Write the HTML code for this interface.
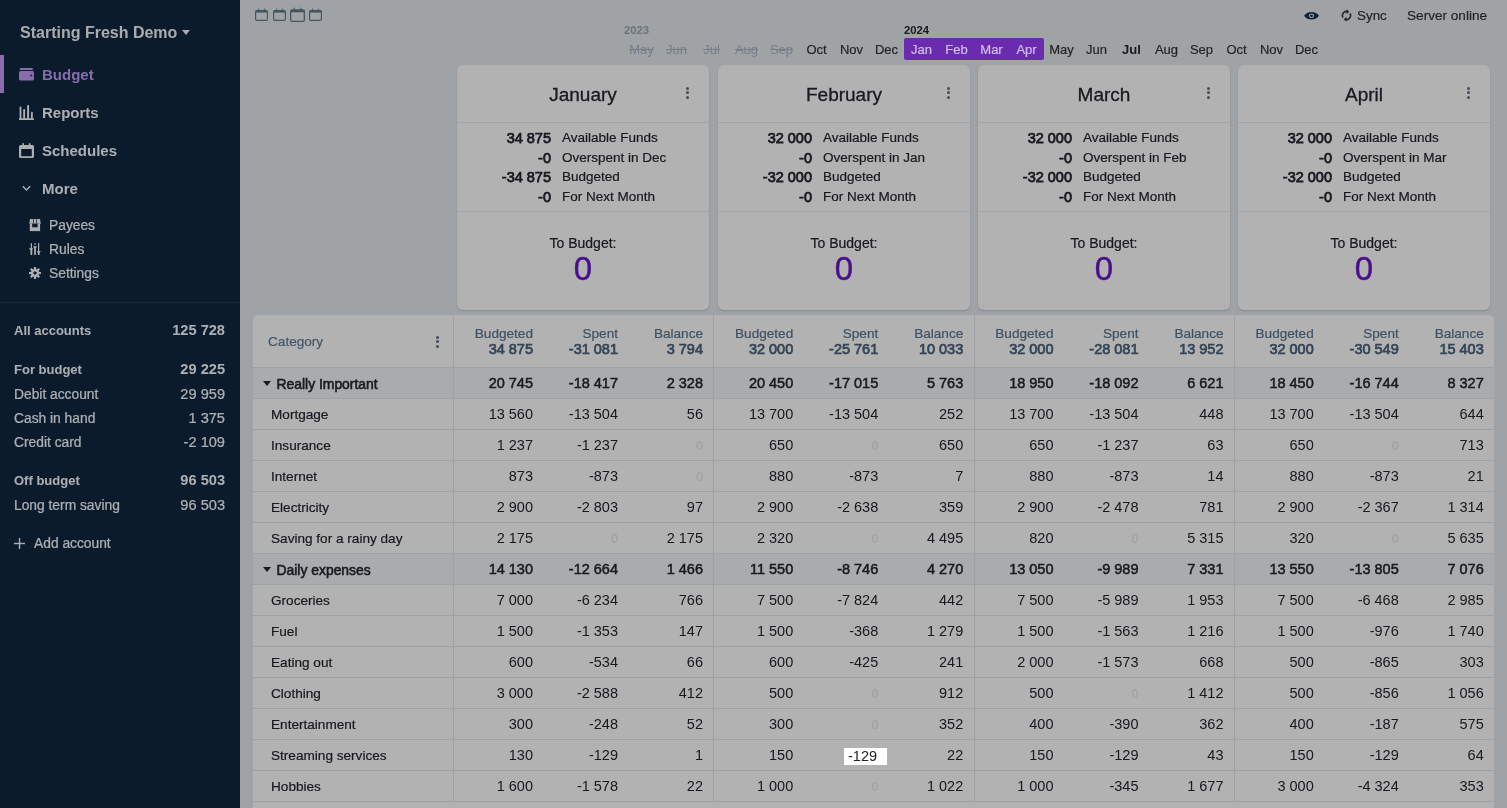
<!DOCTYPE html>
<html><head><meta charset="utf-8"><title>Budget</title>
<style>
*{box-sizing:border-box;margin:0;padding:0}
html,body{width:1507px;height:808px;overflow:hidden}
body>*{will-change:transform}
.sub,.acc,.cell,.sl,.tb,.mo,.abs{-webkit-text-stroke:0.2px currentColor}
[style*="bold"],.sl .n,.yr,.nav,.num{-webkit-text-stroke:0}
.num.sb{font-weight:normal;-webkit-text-stroke:0.5px currentColor}
.card .hd{-webkit-text-stroke:0.3px currentColor}.tz{-webkit-text-stroke:0.4px currentColor}
body{font-family:"Liberation Sans",sans-serif;background:#e6eaee;position:relative;color:#333}
.abs{position:absolute;white-space:nowrap}
#side{position:absolute;left:0;top:0;width:240px;height:808px;background:#102740}
#side .t{color:#f2f5f8}
.nav{position:absolute;left:42px;font-size:15px;font-weight:bold;color:#f5faff;white-space:nowrap;line-height:18px}
.sub{position:absolute;left:49px;font-size:13.8px;color:#f5faff;white-space:nowrap;line-height:16px}
.acc{position:absolute;left:14px;width:211px;font-size:13.8px;color:#f5faff;white-space:nowrap;line-height:16px;display:flex;justify-content:space-between}
.acc b{font-weight:bold}
.acc .n{font-size:14.6px;position:relative;top:-1px}
.cal{position:absolute}
.mo{position:absolute;top:42px;width:35px;text-align:center;font-size:13px;line-height:16px;color:#333}
.mo.s{color:#a9b4c1;text-decoration:line-through;-webkit-text-stroke:0}
.yr{position:absolute;top:24px;font-size:11.3px;font-weight:bold;line-height:13px}
.card{position:absolute;top:65px;height:245px;background:#fff;border-radius:6px;box-shadow:0 1px 2px rgba(0,0,0,.18)}
.card .hd{position:absolute;left:0;right:0;top:0;height:58px;border-bottom:1px solid #e8ecf0;text-align:center;font-size:19px;line-height:22px;padding-top:19px;color:#272630}
.dots{position:absolute;width:3px}
.dots i{display:block;width:3px;height:3px;border-radius:50%;background:#5d7185;margin-bottom:1.3px}
.card .sm{position:absolute;left:0;right:0;top:58px;height:89px;border-bottom:1px solid #e8ecf0}
.sl{position:absolute;left:0;right:0;height:16px;font-size:13.5px;line-height:16px;color:#272630}
.sl .n{position:absolute;right:158px;font-size:14.5px}
.sl .n.s5{-webkit-text-stroke:0.75px currentColor}
.sl .l{position:absolute;left:105px}
.tb{position:absolute;left:0;right:0;top:170px;text-align:center;font-size:14px;line-height:16px;color:#272630}
.tz{position:absolute;left:0;right:0;top:186.7px;text-align:center;font-size:33px;line-height:34px;color:#6b15c9}
#tbl{position:absolute;left:253px;top:315px;width:1241px;height:600px;background:#fff;border-radius:5px 5px 0 0;overflow:hidden}
.row{position:absolute;left:0;width:1241px;height:31px;border-bottom:1px solid #e3e7eb}
.row.g{background:#f2f5f8}
.cell{position:absolute;top:1px;height:30px;line-height:30px;font-size:13.6px;white-space:nowrap;color:#272630}
.vd{position:absolute;top:0;width:1px;height:486px;background:#e3e7eb}
.num{font-size:14.5px;top:0}
.z{color:#e4e8ec}
#ov{position:absolute;left:0;top:0;width:1507px;height:808px;background:rgba(0,0,0,0.3)}
#hl{position:absolute;left:844px;top:748px;width:43px;height:17px;background:#fff;font-size:14.5px;line-height:17px;padding-left:4px;color:#222}
</style></head><body>

<div id="side">
<div class="abs t" style="left:20px;top:23px;font-size:16px;font-weight:bold;line-height:20px">Starting Fresh Demo</div>
<svg class="abs" style="left:182px;top:30px" width="8" height="5" viewBox="0 0 8 5"><path d="M0 0H8L4 5Z" fill="#f2f5f8"/></svg>
<div class="abs" style="left:0;top:55px;width:4px;height:38px;background:#c59afa"></div>
<svg class="abs" style="left:19px;top:68px" width="15" height="13" viewBox="0 0 15 13"><path d="M1.5 0H12.5A1 1 0 0 1 13.7 1.2V2H0.8V1A1 1 0 0 1 1.5 0Z" fill="#c39cf7"/><rect x="0" y="3" width="15" height="9.5" rx="1.5" fill="#c39cf7"/><circle cx="12.3" cy="7.5" r="1.1" fill="#3a2470"/></svg>
<div class="nav" style="top:66px;color:#c39cf7">Budget</div>
<svg class="abs" style="left:19px;top:105px" width="15" height="16" viewBox="0 0 15 16"><g fill="#f5faff"><rect x="0" y="13.3" width="15" height="1.8" rx="0.5"/><rect x="0.6" y="1.5" width="1.8" height="13" rx="0.9"/><rect x="4.2" y="4.1" width="1.9" height="10" rx="0.9"/><rect x="8.1" y="0" width="2" height="14" rx="1"/><rect x="12" y="6.8" width="1.8" height="7" rx="0.9"/></g></svg>
<div class="nav" style="top:104px">Reports</div>
<svg class="abs" style="left:19px;top:143px" width="15" height="16" viewBox="0 0 15 16"><path fill-rule="evenodd" d="M1.5 2H13.5A1.5 1.5 0 0 1 15 3.5V13.6A1.5 1.5 0 0 1 13.5 15.1H1.5A1.5 1.5 0 0 1 0 13.6V3.5A1.5 1.5 0 0 1 1.5 2ZM2.2 6.1V13.2H12.8V6.1Z" fill="#f5faff"/><rect x="3.3" y="0" width="1.7" height="3.2" rx="0.8" fill="#f5faff"/><rect x="9.8" y="0" width="1.7" height="3.2" rx="0.8" fill="#f5faff"/></svg>
<div class="nav" style="top:142px">Schedules</div>
<svg class="abs" style="left:22px;top:185px" width="9" height="7" viewBox="0 0 9 7"><path d="M0.8 1.3L4.5 5L8.2 1.3" fill="none" stroke="#f5faff" stroke-width="1.4"/></svg>
<div class="nav" style="top:179.5px">More</div>
<svg class="abs" style="left:29px;top:219px" width="12" height="13" viewBox="0 0 12 13"><g fill="#f5faff"><path d="M1 0H4.2L3.9 4.7H0.2Z"/><path d="M4.8 0H7.2L7.4 4.7H4.6Z"/><path d="M7.8 0H11L11.8 4.7H8.1Z"/><rect x="0.8" y="4.7" width="10.3" height="7.4"/></g><rect x="3.2" y="4.7" width="5.4" height="3.6" fill="#102740"/></svg>
<div class="sub" style="top:218px">Payees</div>
<svg class="abs" style="left:29px;top:243px" width="12" height="12" viewBox="0 0 12 12"><g fill="#f5faff"><rect x="1.8" y="0" width="1.2" height="12" rx="0.6"/><rect x="1.5" y="6" width="1.8" height="6" rx="0.8"/><path d="M0 5.3H4.2L3.2 7H1Z"/><rect x="5.1" y="0" width="1.8" height="2.2" rx="0.8" opacity="0.6"/><rect x="5.1" y="3" width="1.8" height="9" rx="0.8"/><path d="M4 3.4H8L7 5.2H5Z"/><rect x="9" y="0" width="1.2" height="12" rx="0.6"/><rect x="8.7" y="9" width="1.8" height="3" rx="0.8"/><path d="M7.9 8.1H11.7L10.7 9.7H8.9Z"/></g></svg>
<div class="sub" style="top:242px">Rules</div>
<svg class="abs" style="left:29px;top:267px" width="12" height="12" viewBox="0 0 12 12"><g fill="#f5faff" transform="translate(6 6)"><circle r="4"/><rect x="-1.1" y="-6" width="2.2" height="12"/><rect x="-1.1" y="-6" width="2.2" height="12" transform="rotate(45)"/><rect x="-1.1" y="-6" width="2.2" height="12" transform="rotate(90)"/><rect x="-1.1" y="-6" width="2.2" height="12" transform="rotate(135)"/></g><rect x="4.6" y="4.6" width="2.8" height="2.8" transform="rotate(45 6 6)" fill="#102740"/></svg>
<div class="sub" style="top:266px">Settings</div>
<div class="abs" style="left:0;top:302px;width:240px;height:1px;background:#1f3852"></div>
<div class="acc" style="top:323px;font-weight:bold;font-size:13px"><span>All accounts</span><span class="n">125 728</span></div>
<div class="acc" style="top:362px;font-weight:bold;font-size:13px"><span>For budget</span><span class="n">29 225</span></div>
<div class="acc" style="top:386.5px"><span>Debit account</span><span class="n">29 959</span></div>
<div class="acc" style="top:410.5px"><span>Cash in hand</span><span class="n">1 375</span></div>
<div class="acc" style="top:434.5px"><span>Credit card</span><span class="n">-2 109</span></div>
<div class="acc" style="top:473px;font-weight:bold;font-size:13px"><span>Off budget</span><span class="n">96 503</span></div>
<div class="acc" style="top:497.5px"><span>Long term saving</span><span class="n">96 503</span></div>
<svg class="abs" style="left:14px;top:537.5px" width="11" height="11" viewBox="0 0 11 11"><g fill="#f5faff"><rect x="4.8" y="0" width="1.4" height="11"/><rect x="0" y="4.8" width="11" height="1.4"/></g></svg>
<div class="sub" style="left:34px;top:536px">Add account</div>
</div>
<svg class="cal" style="left:255px;top:8px" width="13" height="13" viewBox="0 0 13 13" preserveAspectRatio="none"><rect x="0.6" y="2.6" width="11.8" height="9.8" rx="1.2" fill="none" stroke="#63788d" stroke-width="1.15"/><rect x="0.6" y="2.6" width="11.8" height="2" fill="#63788d"/><rect x="3.1" y="0.6" width="1" height="2.6" fill="#63788d"/><rect x="8.9" y="0.6" width="1" height="2.6" fill="#63788d"/></svg>
<svg class="cal" style="left:273px;top:8px" width="13" height="13" viewBox="0 0 13 13" preserveAspectRatio="none"><rect x="0.6" y="2.6" width="11.8" height="9.8" rx="1.2" fill="none" stroke="#63788d" stroke-width="1.15"/><rect x="0.6" y="2.6" width="11.8" height="2" fill="#63788d"/><rect x="3.1" y="0.6" width="1" height="2.6" fill="#63788d"/><rect x="8.9" y="0.6" width="1" height="2.6" fill="#63788d"/></svg>
<svg class="cal" style="left:290px;top:7px" width="15" height="15" viewBox="0 0 13 13" preserveAspectRatio="none" preserveAspectRatio="none"><rect x="0.6" y="2.6" width="11.8" height="9.8" rx="1.2" fill="none" stroke="#63788d" stroke-width="1.15"/><rect x="0.6" y="2.6" width="11.8" height="2" fill="#63788d"/><rect x="3.1" y="0.6" width="1" height="2.6" fill="#63788d"/><rect x="8.9" y="0.6" width="1" height="2.6" fill="#63788d"/></svg>
<svg class="cal" style="left:309px;top:8px" width="13" height="13" viewBox="0 0 13 13" preserveAspectRatio="none"><rect x="0.6" y="2.6" width="11.8" height="9.8" rx="1.2" fill="none" stroke="#63788d" stroke-width="1.15"/><rect x="0.6" y="2.6" width="11.8" height="2" fill="#63788d"/><rect x="3.1" y="0.6" width="1" height="2.6" fill="#63788d"/><rect x="8.9" y="0.6" width="1" height="2.6" fill="#63788d"/></svg>
<svg class="abs" style="left:1304px;top:11.8px" width="15" height="7.6" viewBox="0 0 15 9" preserveAspectRatio="none"><path d="M0 4.5C2 1.2 4.6 0 7.5 0S13 1.2 15 4.5C13 7.8 10.4 9 7.5 9S2 7.8 0 4.5Z" fill="#1f3247"/><circle cx="7.5" cy="4.5" r="2.6" fill="#e6eaee"/><circle cx="7.5" cy="4.5" r="1.4" fill="#1f3247"/></svg>
<svg class="abs" style="left:1341px;top:9px" width="11" height="13" viewBox="0 0 11 13"><g fill="none" stroke="#333" stroke-width="1.6"><path d="M2 8.5A4 4 0 0 1 6.5 2.6"/><path d="M9 4.5A4 4 0 0 1 4.5 10.4"/></g><path d="M5.5 0.3L8.3 2.8L5.5 5.2Z" fill="#333"/><path d="M5.5 7.8L2.7 10.2L5.5 12.7Z" fill="#333"/></svg>
<div class="abs" style="left:1357px;top:8px;font-size:13.4px;line-height:16px;color:#333">Sync</div>
<div class="abs" style="left:1407px;top:8px;font-size:13.6px;line-height:16px;color:#333">Server online</div>
<div class="yr" style="left:624px;color:#9aa5b1">2023</div>
<div class="yr" style="left:904px;color:#272630">2024</div>
<div class="mo s" style="left:623.5px">May</div>
<div class="mo s" style="left:658.5px">Jun</div>
<div class="mo s" style="left:693.5px">Jul</div>
<div class="mo s" style="left:728.5px">Aug</div>
<div class="mo s" style="left:763.5px">Sep</div>
<div class="mo" style="left:798.5px">Oct</div>
<div class="mo" style="left:833.5px">Nov</div>
<div class="mo" style="left:868.5px">Dec</div>
<div class="mo" style="left:1043.5px">May</div>
<div class="mo" style="left:1078.5px">Jun</div>
<div class="mo" style="left:1113.5px;font-weight:bold;color:#272630">Jul</div>
<div class="mo" style="left:1148.5px">Aug</div>
<div class="mo" style="left:1183.5px">Sep</div>
<div class="mo" style="left:1218.5px">Oct</div>
<div class="mo" style="left:1253.5px">Nov</div>
<div class="mo" style="left:1288.5px">Dec</div>
<div class="card" style="left:457px;width:252px">
<div class="hd">January</div>
<div class="dots" style="left:229px;top:22px"><i></i><i></i><i></i></div>
<div class="sm">
<div class="sl" style="top:6.5px"><span class="n s5">34 875</span><span class="l">Available Funds</span></div>
<div class="sl" style="top:27.0px"><span class="n s5">-0</span><span class="l">Overspent in Dec</span></div>
<div class="sl" style="top:45.8px"><span class="n s5">-34 875</span><span class="l">Budgeted</span></div>
<div class="sl" style="top:65.8px"><span class="n s5">-0</span><span class="l">For Next Month</span></div>
</div>
<div class="tb">To Budget:</div>
<div class="tz">0</div>
</div>
<div class="card" style="left:718px;width:252px">
<div class="hd">February</div>
<div class="dots" style="left:229px;top:22px"><i></i><i></i><i></i></div>
<div class="sm">
<div class="sl" style="top:6.5px"><span class="n s5">32 000</span><span class="l">Available Funds</span></div>
<div class="sl" style="top:27.0px"><span class="n s5">-0</span><span class="l">Overspent in Jan</span></div>
<div class="sl" style="top:45.8px"><span class="n s5">-32 000</span><span class="l">Budgeted</span></div>
<div class="sl" style="top:65.8px"><span class="n s5">-0</span><span class="l">For Next Month</span></div>
</div>
<div class="tb">To Budget:</div>
<div class="tz">0</div>
</div>
<div class="card" style="left:978px;width:252px">
<div class="hd">March</div>
<div class="dots" style="left:229px;top:22px"><i></i><i></i><i></i></div>
<div class="sm">
<div class="sl" style="top:6.5px"><span class="n s5">32 000</span><span class="l">Available Funds</span></div>
<div class="sl" style="top:27.0px"><span class="n s5">-0</span><span class="l">Overspent in Feb</span></div>
<div class="sl" style="top:45.8px"><span class="n s5">-32 000</span><span class="l">Budgeted</span></div>
<div class="sl" style="top:65.8px"><span class="n s5">-0</span><span class="l">For Next Month</span></div>
</div>
<div class="tb">To Budget:</div>
<div class="tz">0</div>
</div>
<div class="card" style="left:1238px;width:252px">
<div class="hd">April</div>
<div class="dots" style="left:229px;top:22px"><i></i><i></i><i></i></div>
<div class="sm">
<div class="sl" style="top:6.5px"><span class="n s5">32 000</span><span class="l">Available Funds</span></div>
<div class="sl" style="top:27.0px"><span class="n s5">-0</span><span class="l">Overspent in Mar</span></div>
<div class="sl" style="top:45.8px"><span class="n s5">-32 000</span><span class="l">Budgeted</span></div>
<div class="sl" style="top:65.8px"><span class="n s5">-0</span><span class="l">For Next Month</span></div>
</div>
<div class="tb">To Budget:</div>
<div class="tz">0</div>
</div>
<div id="tbl">
<div class="row" style="top:0;height:53px;">
<div class="cell" style="left:15px;top:12px;height:30px;color:#627d98">Category</div>
<div class="dots" style="left:183px;top:21px"><i></i><i></i><i></i></div>
<div class="abs" style="right:961.00px;top:11px;text-align:right;font-size:13.6px;line-height:16px;color:#5c748c">Budgeted</div>
<div class="abs num sb" style="right:961.00px;top:26px;text-align:right;line-height:17px;color:#4d647b;-webkit-text-stroke:0.7px #4d647b">34 875</div>
<div class="abs" style="right:876.00px;top:11px;text-align:right;font-size:13.6px;line-height:16px;color:#5c748c">Spent</div>
<div class="abs num sb" style="right:876.00px;top:26px;text-align:right;line-height:17px;color:#4d647b;-webkit-text-stroke:0.7px #4d647b">-31 081</div>
<div class="abs" style="right:791.00px;top:11px;text-align:right;font-size:13.6px;line-height:16px;color:#5c748c">Balance</div>
<div class="abs num sb" style="right:791.00px;top:26px;text-align:right;line-height:17px;color:#4d647b;-webkit-text-stroke:0.7px #4d647b">3 794</div>
<div class="abs" style="right:700.75px;top:11px;text-align:right;font-size:13.6px;line-height:16px;color:#5c748c">Budgeted</div>
<div class="abs num sb" style="right:700.75px;top:26px;text-align:right;line-height:17px;color:#4d647b;-webkit-text-stroke:0.7px #4d647b">32 000</div>
<div class="abs" style="right:615.75px;top:11px;text-align:right;font-size:13.6px;line-height:16px;color:#5c748c">Spent</div>
<div class="abs num sb" style="right:615.75px;top:26px;text-align:right;line-height:17px;color:#4d647b;-webkit-text-stroke:0.7px #4d647b">-25 761</div>
<div class="abs" style="right:530.75px;top:11px;text-align:right;font-size:13.6px;line-height:16px;color:#5c748c">Balance</div>
<div class="abs num sb" style="right:530.75px;top:26px;text-align:right;line-height:17px;color:#4d647b;-webkit-text-stroke:0.7px #4d647b">10 033</div>
<div class="abs" style="right:440.50px;top:11px;text-align:right;font-size:13.6px;line-height:16px;color:#5c748c">Budgeted</div>
<div class="abs num sb" style="right:440.50px;top:26px;text-align:right;line-height:17px;color:#4d647b;-webkit-text-stroke:0.7px #4d647b">32 000</div>
<div class="abs" style="right:355.50px;top:11px;text-align:right;font-size:13.6px;line-height:16px;color:#5c748c">Spent</div>
<div class="abs num sb" style="right:355.50px;top:26px;text-align:right;line-height:17px;color:#4d647b;-webkit-text-stroke:0.7px #4d647b">-28 081</div>
<div class="abs" style="right:270.50px;top:11px;text-align:right;font-size:13.6px;line-height:16px;color:#5c748c">Balance</div>
<div class="abs num sb" style="right:270.50px;top:26px;text-align:right;line-height:17px;color:#4d647b;-webkit-text-stroke:0.7px #4d647b">13 952</div>
<div class="abs" style="right:180.25px;top:11px;text-align:right;font-size:13.6px;line-height:16px;color:#5c748c">Budgeted</div>
<div class="abs num sb" style="right:180.25px;top:26px;text-align:right;line-height:17px;color:#4d647b;-webkit-text-stroke:0.7px #4d647b">32 000</div>
<div class="abs" style="right:95.25px;top:11px;text-align:right;font-size:13.6px;line-height:16px;color:#5c748c">Spent</div>
<div class="abs num sb" style="right:95.25px;top:26px;text-align:right;line-height:17px;color:#4d647b;-webkit-text-stroke:0.7px #4d647b">-30 549</div>
<div class="abs" style="right:10.25px;top:11px;text-align:right;font-size:13.6px;line-height:16px;color:#5c748c">Balance</div>
<div class="abs num sb" style="right:10.25px;top:26px;text-align:right;line-height:17px;color:#4d647b;-webkit-text-stroke:0.7px #4d647b">15 403</div>
</div>
<div class="row g" style="top:53px">
<svg class="abs" style="left:10px;top:13px" width="8" height="5" viewBox="0 0 8 5"><path d="M0 0H8L4 5Z" fill="#272630"/></svg>
<div class="cell" style="left:23.5px;font-size:13.9px;-webkit-text-stroke:0.55px currentColor">Really Important</div>
<div class="cell num sb" style="right:961.00px;">20 745</div>
<div class="cell num sb" style="right:876.00px;">-18 417</div>
<div class="cell num sb" style="right:791.00px;">2 328</div>
<div class="cell num sb" style="right:700.75px;">20 450</div>
<div class="cell num sb" style="right:615.75px;">-17 015</div>
<div class="cell num sb" style="right:530.75px;">5 763</div>
<div class="cell num sb" style="right:440.50px;">18 950</div>
<div class="cell num sb" style="right:355.50px;">-18 092</div>
<div class="cell num sb" style="right:270.50px;">6 621</div>
<div class="cell num sb" style="right:180.25px;">18 450</div>
<div class="cell num sb" style="right:95.25px;">-16 744</div>
<div class="cell num sb" style="right:10.25px;">8 327</div>
</div>
<div class="row" style="top:84px">
<div class="cell" style="left:18px">Mortgage</div>
<div class="cell num" style="right:961.00px;">13 560</div>
<div class="cell num" style="right:876.00px;">-13 504</div>
<div class="cell num" style="right:791.00px;">56</div>
<div class="cell num" style="right:700.75px;">13 700</div>
<div class="cell num" style="right:615.75px;">-13 504</div>
<div class="cell num" style="right:530.75px;">252</div>
<div class="cell num" style="right:440.50px;">13 700</div>
<div class="cell num" style="right:355.50px;">-13 504</div>
<div class="cell num" style="right:270.50px;">448</div>
<div class="cell num" style="right:180.25px;">13 700</div>
<div class="cell num" style="right:95.25px;">-13 504</div>
<div class="cell num" style="right:10.25px;">644</div>
</div>
<div class="row" style="top:115px">
<div class="cell" style="left:18px">Insurance</div>
<div class="cell num" style="right:961.00px;">1 237</div>
<div class="cell num" style="right:876.00px;">-1 237</div>
<div class="cell z" style="right:791.00px;font-size:12px">0</div>
<div class="cell num" style="right:700.75px;">650</div>
<div class="cell z" style="right:615.75px;font-size:12px">0</div>
<div class="cell num" style="right:530.75px;">650</div>
<div class="cell num" style="right:440.50px;">650</div>
<div class="cell num" style="right:355.50px;">-1 237</div>
<div class="cell num" style="right:270.50px;">63</div>
<div class="cell num" style="right:180.25px;">650</div>
<div class="cell z" style="right:95.25px;font-size:12px">0</div>
<div class="cell num" style="right:10.25px;">713</div>
</div>
<div class="row" style="top:146px">
<div class="cell" style="left:18px">Internet</div>
<div class="cell num" style="right:961.00px;">873</div>
<div class="cell num" style="right:876.00px;">-873</div>
<div class="cell z" style="right:791.00px;font-size:12px">0</div>
<div class="cell num" style="right:700.75px;">880</div>
<div class="cell num" style="right:615.75px;">-873</div>
<div class="cell num" style="right:530.75px;">7</div>
<div class="cell num" style="right:440.50px;">880</div>
<div class="cell num" style="right:355.50px;">-873</div>
<div class="cell num" style="right:270.50px;">14</div>
<div class="cell num" style="right:180.25px;">880</div>
<div class="cell num" style="right:95.25px;">-873</div>
<div class="cell num" style="right:10.25px;">21</div>
</div>
<div class="row" style="top:177px">
<div class="cell" style="left:18px">Electricity</div>
<div class="cell num" style="right:961.00px;">2 900</div>
<div class="cell num" style="right:876.00px;">-2 803</div>
<div class="cell num" style="right:791.00px;">97</div>
<div class="cell num" style="right:700.75px;">2 900</div>
<div class="cell num" style="right:615.75px;">-2 638</div>
<div class="cell num" style="right:530.75px;">359</div>
<div class="cell num" style="right:440.50px;">2 900</div>
<div class="cell num" style="right:355.50px;">-2 478</div>
<div class="cell num" style="right:270.50px;">781</div>
<div class="cell num" style="right:180.25px;">2 900</div>
<div class="cell num" style="right:95.25px;">-2 367</div>
<div class="cell num" style="right:10.25px;">1 314</div>
</div>
<div class="row" style="top:208px">
<div class="cell" style="left:18px">Saving for a rainy day</div>
<div class="cell num" style="right:961.00px;">2 175</div>
<div class="cell z" style="right:876.00px;font-size:12px">0</div>
<div class="cell num" style="right:791.00px;">2 175</div>
<div class="cell num" style="right:700.75px;">2 320</div>
<div class="cell z" style="right:615.75px;font-size:12px">0</div>
<div class="cell num" style="right:530.75px;">4 495</div>
<div class="cell num" style="right:440.50px;">820</div>
<div class="cell z" style="right:355.50px;font-size:12px">0</div>
<div class="cell num" style="right:270.50px;">5 315</div>
<div class="cell num" style="right:180.25px;">320</div>
<div class="cell z" style="right:95.25px;font-size:12px">0</div>
<div class="cell num" style="right:10.25px;">5 635</div>
</div>
<div class="row g" style="top:239px">
<svg class="abs" style="left:10px;top:13px" width="8" height="5" viewBox="0 0 8 5"><path d="M0 0H8L4 5Z" fill="#272630"/></svg>
<div class="cell" style="left:23.5px;font-size:13.9px;-webkit-text-stroke:0.55px currentColor">Daily expenses</div>
<div class="cell num sb" style="right:961.00px;">14 130</div>
<div class="cell num sb" style="right:876.00px;">-12 664</div>
<div class="cell num sb" style="right:791.00px;">1 466</div>
<div class="cell num sb" style="right:700.75px;">11 550</div>
<div class="cell num sb" style="right:615.75px;">-8 746</div>
<div class="cell num sb" style="right:530.75px;">4 270</div>
<div class="cell num sb" style="right:440.50px;">13 050</div>
<div class="cell num sb" style="right:355.50px;">-9 989</div>
<div class="cell num sb" style="right:270.50px;">7 331</div>
<div class="cell num sb" style="right:180.25px;">13 550</div>
<div class="cell num sb" style="right:95.25px;">-13 805</div>
<div class="cell num sb" style="right:10.25px;">7 076</div>
</div>
<div class="row" style="top:270px">
<div class="cell" style="left:18px">Groceries</div>
<div class="cell num" style="right:961.00px;">7 000</div>
<div class="cell num" style="right:876.00px;">-6 234</div>
<div class="cell num" style="right:791.00px;">766</div>
<div class="cell num" style="right:700.75px;">7 500</div>
<div class="cell num" style="right:615.75px;">-7 824</div>
<div class="cell num" style="right:530.75px;">442</div>
<div class="cell num" style="right:440.50px;">7 500</div>
<div class="cell num" style="right:355.50px;">-5 989</div>
<div class="cell num" style="right:270.50px;">1 953</div>
<div class="cell num" style="right:180.25px;">7 500</div>
<div class="cell num" style="right:95.25px;">-6 468</div>
<div class="cell num" style="right:10.25px;">2 985</div>
</div>
<div class="row" style="top:301px">
<div class="cell" style="left:18px">Fuel</div>
<div class="cell num" style="right:961.00px;">1 500</div>
<div class="cell num" style="right:876.00px;">-1 353</div>
<div class="cell num" style="right:791.00px;">147</div>
<div class="cell num" style="right:700.75px;">1 500</div>
<div class="cell num" style="right:615.75px;">-368</div>
<div class="cell num" style="right:530.75px;">1 279</div>
<div class="cell num" style="right:440.50px;">1 500</div>
<div class="cell num" style="right:355.50px;">-1 563</div>
<div class="cell num" style="right:270.50px;">1 216</div>
<div class="cell num" style="right:180.25px;">1 500</div>
<div class="cell num" style="right:95.25px;">-976</div>
<div class="cell num" style="right:10.25px;">1 740</div>
</div>
<div class="row" style="top:332px">
<div class="cell" style="left:18px">Eating out</div>
<div class="cell num" style="right:961.00px;">600</div>
<div class="cell num" style="right:876.00px;">-534</div>
<div class="cell num" style="right:791.00px;">66</div>
<div class="cell num" style="right:700.75px;">600</div>
<div class="cell num" style="right:615.75px;">-425</div>
<div class="cell num" style="right:530.75px;">241</div>
<div class="cell num" style="right:440.50px;">2 000</div>
<div class="cell num" style="right:355.50px;">-1 573</div>
<div class="cell num" style="right:270.50px;">668</div>
<div class="cell num" style="right:180.25px;">500</div>
<div class="cell num" style="right:95.25px;">-865</div>
<div class="cell num" style="right:10.25px;">303</div>
</div>
<div class="row" style="top:363px">
<div class="cell" style="left:18px">Clothing</div>
<div class="cell num" style="right:961.00px;">3 000</div>
<div class="cell num" style="right:876.00px;">-2 588</div>
<div class="cell num" style="right:791.00px;">412</div>
<div class="cell num" style="right:700.75px;">500</div>
<div class="cell z" style="right:615.75px;font-size:12px">0</div>
<div class="cell num" style="right:530.75px;">912</div>
<div class="cell num" style="right:440.50px;">500</div>
<div class="cell z" style="right:355.50px;font-size:12px">0</div>
<div class="cell num" style="right:270.50px;">1 412</div>
<div class="cell num" style="right:180.25px;">500</div>
<div class="cell num" style="right:95.25px;">-856</div>
<div class="cell num" style="right:10.25px;">1 056</div>
</div>
<div class="row" style="top:394px">
<div class="cell" style="left:18px">Entertainment</div>
<div class="cell num" style="right:961.00px;">300</div>
<div class="cell num" style="right:876.00px;">-248</div>
<div class="cell num" style="right:791.00px;">52</div>
<div class="cell num" style="right:700.75px;">300</div>
<div class="cell z" style="right:615.75px;font-size:12px">0</div>
<div class="cell num" style="right:530.75px;">352</div>
<div class="cell num" style="right:440.50px;">400</div>
<div class="cell num" style="right:355.50px;">-390</div>
<div class="cell num" style="right:270.50px;">362</div>
<div class="cell num" style="right:180.25px;">400</div>
<div class="cell num" style="right:95.25px;">-187</div>
<div class="cell num" style="right:10.25px;">575</div>
</div>
<div class="row" style="top:425px">
<div class="cell" style="left:18px">Streaming services</div>
<div class="cell num" style="right:961.00px;">130</div>
<div class="cell num" style="right:876.00px;">-129</div>
<div class="cell num" style="right:791.00px;">1</div>
<div class="cell num" style="right:700.75px;">150</div>
<div class="cell num" style="right:530.75px;">22</div>
<div class="cell num" style="right:440.50px;">150</div>
<div class="cell num" style="right:355.50px;">-129</div>
<div class="cell num" style="right:270.50px;">43</div>
<div class="cell num" style="right:180.25px;">150</div>
<div class="cell num" style="right:95.25px;">-129</div>
<div class="cell num" style="right:10.25px;">64</div>
</div>
<div class="row" style="top:456px">
<div class="cell" style="left:18px">Hobbies</div>
<div class="cell num" style="right:961.00px;">1 600</div>
<div class="cell num" style="right:876.00px;">-1 578</div>
<div class="cell num" style="right:791.00px;">22</div>
<div class="cell num" style="right:700.75px;">1 000</div>
<div class="cell z" style="right:615.75px;font-size:12px">0</div>
<div class="cell num" style="right:530.75px;">1 022</div>
<div class="cell num" style="right:440.50px;">1 000</div>
<div class="cell num" style="right:355.50px;">-345</div>
<div class="cell num" style="right:270.50px;">1 677</div>
<div class="cell num" style="right:180.25px;">3 000</div>
<div class="cell num" style="right:95.25px;">-4 324</div>
<div class="cell num" style="right:10.25px;">353</div>
</div>
<div class="vd" style="left:200.00px"></div>
<div class="vd" style="left:460.25px"></div>
<div class="vd" style="left:720.50px"></div>
<div class="vd" style="left:980.75px"></div>
</div>
<div id="ov"></div>
<div class="abs" style="left:904px;top:38px;width:140px;height:22px;background:#6a2cae;border-radius:2px;z-index:5"></div><div class="mo" style="left:903.5px;color:#d2bdec;z-index:6">Jan</div><div class="mo" style="left:938.5px;color:#d2bdec;z-index:6">Feb</div><div class="mo" style="left:973.5px;color:#d2bdec;z-index:6">Mar</div><div class="mo" style="left:1008.5px;color:#d2bdec;z-index:6">Apr</div>
<div id="hl">-129</div>
</body></html>
